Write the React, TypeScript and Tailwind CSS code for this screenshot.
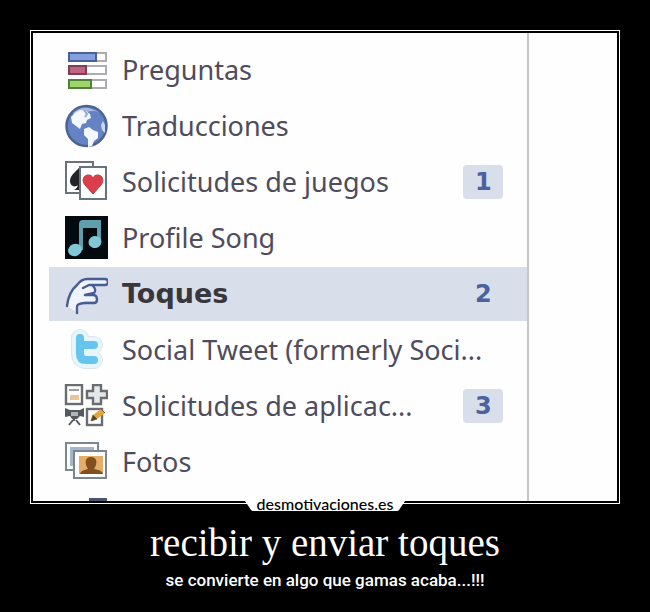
import type { ReactNode } from "react";

interface MenuItem {
  id: string;
  label: string;
  icon: ReactNode;
  count?: number;
  active?: boolean;
}

function Icon({ children }: { children: ReactNode }) {
  return (
    <svg className="w-11 h-11 shrink-0" viewBox="0 0 44 44" fill="none" aria-hidden="true">
      {children}
    </svg>
  );
}

const pollBars = [
  { y: 5, width: 27, fill: "#839fdc", stroke: "#48619c" },
  { y: 18, width: 17, fill: "#bd6480", stroke: "#803d56" },
  { y: 32, width: 22, fill: "#9ed66c", stroke: "#4f8238" },
];

function PollIcon() {
  return (
    <Icon>
      {pollBars.map((bar) => (
        <g key={bar.y} strokeWidth="2">
          <rect x="5" y={bar.y} width="37" height="8" fill="#fff" stroke="#adadb1" />
          <rect x="5" y={bar.y} width={bar.width} height="8" fill={bar.fill} stroke={bar.stroke} />
        </g>
      ))}
    </Icon>
  );
}

function GlobeIcon() {
  return (
    <Icon>
      <circle cx="22.5" cy="22" r="20" fill="#6583c4" stroke="#4c6396" strokeWidth="2.5" />
      <path d="M9 9Q16 3 24 4L36 8Q25 5 13 12Z" fill="#a9bce3" />
      <path d="M11 9l5-3 6 1 4 3 1 4-4 2-1 3-4 1-2 5-4-3-4-3-1-6z" fill="#f4f7fd" />
      <path d="M20 25l5-2 4 3 5 2v6l-4 3-2 5-4 1v-8l-4-4z" fill="#f4f7fd" />
      <path d="M39 17l2 4v8l-3-3-1-5z" fill="#cbd8f1" />
      <path d="M20 6l3 4-2 3" stroke="#8ea6d9" strokeWidth="2" />
    </Icon>
  );
}

function CardsIcon() {
  return (
    <Icon>
      <rect x="2" y="2" width="27" height="31" fill="#fff" stroke="#68737b" strokeWidth="2" />
      <path d="M16 6C14 11 6 14 6 21c0 5 5 7 8 4-1 3-2 4-4 5h10V8z" fill="#222427" />
      <rect x="16" y="7" width="26" height="32" fill="#fff" stroke="#68737b" strokeWidth="2" />
      <path
        d="M29 34L21 25c-4-5-1-10 3-10 3 0 4 1 5 3 1-2 2-3 5-3 4 0 7 5 3 10z"
        fill="#dc3f4b"
        stroke="#b83c48"
      />
    </Icon>
  );
}

function SongIcon() {
  return (
    <Icon>
      <rect x="1" y="0" width="43" height="43" fill="#050a0e" />
      <path d="M15 34V8q0-4 4-4h18v22h-4V12H19v22z" fill="#5f9fad" />
      <ellipse cx="11" cy="34" rx="7" ry="6" transform="rotate(-20 11 34)" fill="#80c8d8" />
      <ellipse cx="31" cy="26" rx="6.5" ry="6" transform="rotate(-20 31 26)" fill="#80c8d8" />
    </Icon>
  );
}

function PokeIcon() {
  return (
    <Icon>
      <path
        d="M3 34C4 25 7 18 13 13c3-4 6-6 10-6h18c4 0 4 6 0 6H29c2 2 3 5 2 7l-8 2h7c4 1 4 7 0 7h-8c-5 0-8 5-8 12L3 34z"
        fill="#eff3fb"
      />
      <path
        d="M3 34C4 25 7 18 13 13c3-4 6-6 10-6h18c4 0 4 6 0 6H25l-6 3M29 14c2 2 3 5 1 7l-9 2h9c4 1 4 8 0 8h-8c-5 0-9 1-9 4v6"
        stroke="#485d92"
        strokeWidth="2.4"
        strokeLinecap="round"
        strokeLinejoin="round"
      />
    </Icon>
  );
}

function TweetIcon() {
  const letter = "M16 10v16q0 6 6 6h8M16 17h14";
  return (
    <Icon>
      <g strokeLinecap="round" strokeLinejoin="round">
        <path d={letter} stroke="#dde5e9" strokeWidth="18" />
        <path d={letter} stroke="#e6f6fc" strokeWidth="16" />
        <path d={letter} stroke="#65c5ef" strokeWidth="8" />
      </g>
    </Icon>
  );
}

function AppsIcon() {
  return (
    <Icon>
      <g stroke="#6a6d70" strokeWidth="2.4">
        <rect x="2" y="1" width="16" height="19" fill="#fff" />
        <path d="M29 1h8v6h6v7h-6v6h-8v-6h-6V7h6z" fill="#e5e8e9" />
        <rect x="23" y="25" width="15" height="16" fill="#fff" />
      </g>
      <path d="M5 6h10" stroke="#9b9da0" strokeWidth="2" />
      <rect x="6" y="11" width="9" height="5" fill="#edc497" />
      <path d="M1 24l5 2h10l4-2v9l-4-1-3 3H8l-2-3-5 1z" fill="#55595d" />
      <path d="M7 28h7v4H7z" fill="#b0b5b8" />
      <path d="M10 34v3M9 36l-4 5M12 36l4 5" stroke="#55595d" strokeWidth="2" />
      <path d="M27 37l2-6 8-6 4 4-8 6z" fill="#e6a53a" />
      <path d="M27 37l2-6 4 4zM37 25l4 4" fill="#453f38" stroke="#7e602e" />
    </Icon>
  );
}

function PhotosIcon() {
  return (
    <Icon>
      <rect x="2" y="3" width="32" height="27" fill="#fff" stroke="#7c868e" strokeWidth="2" />
      <rect x="6" y="7" width="24" height="19" fill="#a7b5cc" />
      <rect x="10" y="11" width="32" height="27" fill="#fff" stroke="#7c868e" strokeWidth="2" />
      <rect x="15" y="16" width="24" height="18" fill="#e5ad69" />
      <path d="M16 34c1-4 5-4 8-5-4-6-3-12 3-12s7 6 3 12c4 1 8 1 9 5z" fill="#80501f" />
    </Icon>
  );
}

const items: MenuItem[] = [
  { id: "preguntas", label: "Preguntas", icon: <PollIcon /> },
  { id: "traducciones", label: "Traducciones", icon: <GlobeIcon /> },
  { id: "juegos", label: "Solicitudes de juegos", icon: <CardsIcon />, count: 1 },
  { id: "song", label: "Profile Song", icon: <SongIcon /> },
  { id: "toques", label: "Toques", icon: <PokeIcon />, count: 2, active: true },
  { id: "tweet", label: "Social Tweet (formerly Soci...", icon: <TweetIcon /> },
  { id: "aplicaciones", label: "Solicitudes de aplicac...", icon: <AppsIcon />, count: 3 },
  { id: "fotos", label: "Fotos", icon: <PhotosIcon /> },
];

function MenuRow({ item }: { item: MenuItem }) {
  return (
    <a
      href={`#${item.id}`}
      className={`flex items-center h-[54px] pl-[15px] pr-6 ${item.active ? "bg-[#d8deea]" : ""}`}
    >
      {item.icon}
      <span
        className={`ml-[14px] whitespace-nowrap text-[27px] ${
          item.active
            ? "font-['DejaVu_Sans',sans-serif] font-bold text-[#38383c]"
            : "font-['Noto_Sans',sans-serif] text-[#4f4c5c]"
        }`}
      >
        {item.label}
      </span>
      {item.count !== undefined && (
        <span className="ml-auto w-10 h-[34px] shrink-0 flex items-center justify-center rounded bg-[#d8deea] font-['DejaVu_Sans',sans-serif] text-2xl font-bold text-[#4a62a0]">
          {item.count}
        </span>
      )}
    </a>
  );
}

function Brand() {
  return (
    <div className="absolute left-1/2 -bottom-2 -translate-x-1/2 w-40 h-[14px] flex items-center justify-center">
      <svg className="absolute inset-0 w-full h-full" viewBox="0 0 160 14" aria-hidden="true">
        <path d="M0 0H160V4L154 13Q153 14 152 14H8Q7 14 6 13L0 4Z" fill="#fff" />
      </svg>
      <span className="relative font-['Lato',sans-serif] text-base leading-none font-medium text-black">
        desmotivaciones.es
      </span>
    </div>
  );
}

export default function App() {
  return (
    <main className="min-h-screen bg-black px-[30px] pt-[30px] pb-4 text-white">
      <section className="relative border border-white p-0.5">
        <div className="bg-[#fefefe]">
          <nav className="w-[85%] border-r-2 border-[#c5c5c8] pt-[10px] pl-4">
            <div className="flex flex-col gap-0.5">
              {items.map((item) => (
                <MenuRow key={item.id} item={item} />
              ))}
            </div>
            <div className="flex items-end h-3 pl-10">
              <span className="w-[18px] h-[3px] bg-[#48566c]" />
            </div>
          </nav>
        </div>
        <Brand />
      </section>

      <header className="text-center">
        <h1 className="mt-4 font-['Liberation_Serif',serif] text-[39px] leading-[46px]">
          recibir y enviar toques
        </h1>
        <p className="mt-0.5 font-['Roboto',sans-serif] text-[17px] leading-6 font-medium">
          se convierte en algo que gamas acaba...!!!
        </p>
      </header>
    </main>
  );
}
